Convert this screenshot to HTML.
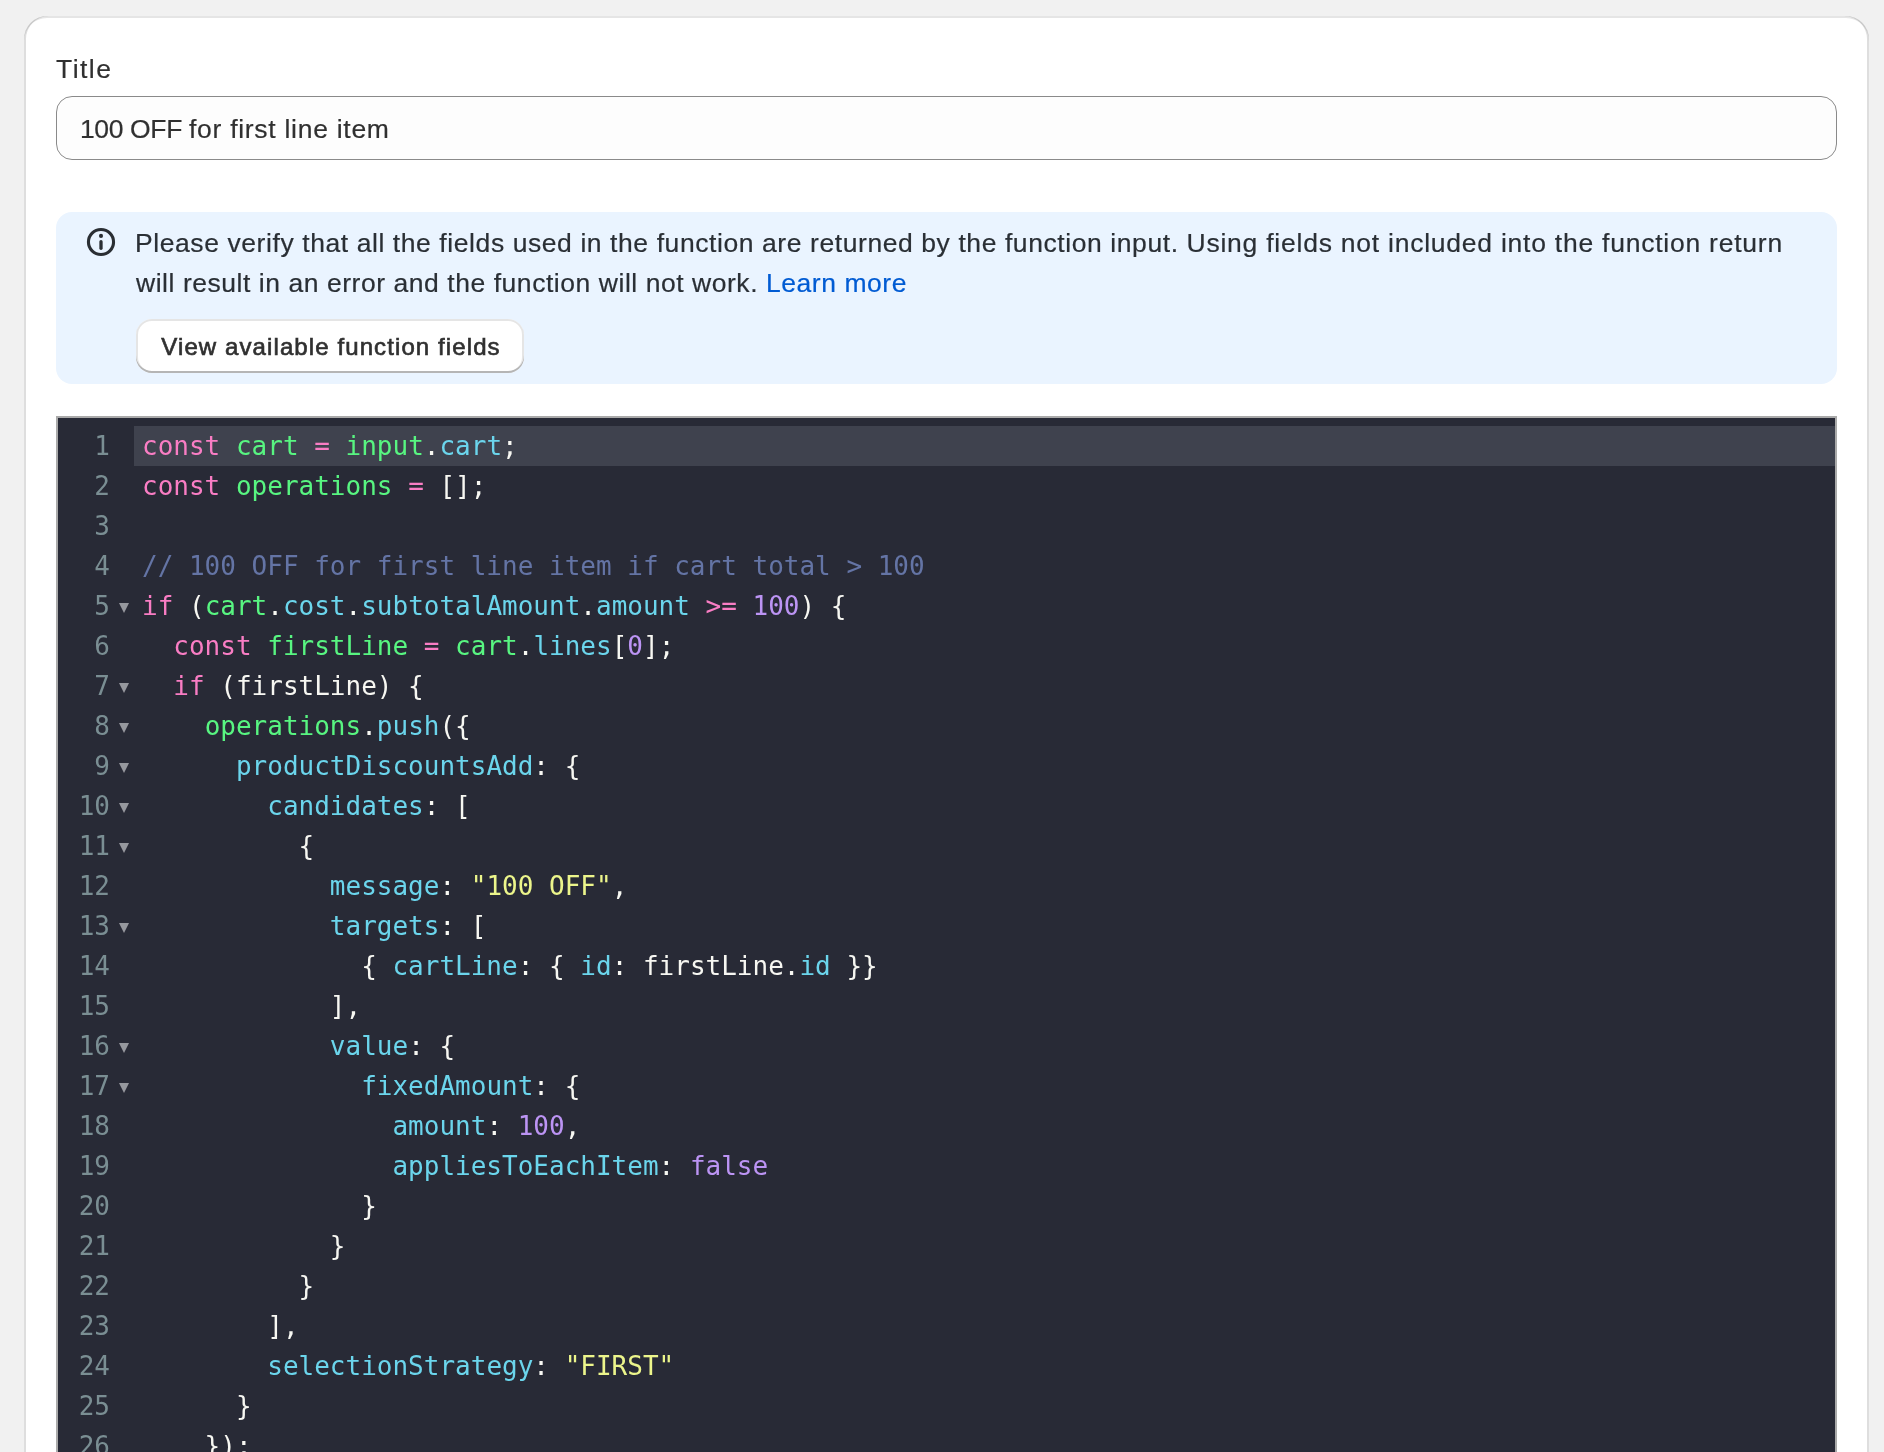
<!DOCTYPE html>
<html lang="en">
<head>
<meta charset="utf-8">
<title>Function editor</title>
<style>
*{box-sizing:border-box;margin:0;padding:0}
html,body{width:1884px;height:1452px;overflow:hidden;background:#f1f1f1}
body{font-family:"Liberation Sans",sans-serif;color:#303030;position:relative}
.card{position:absolute;left:24px;top:16px;width:1845px;height:1500px;background:#fff;border-radius:23px;box-shadow:inset 2px 0 0 0 rgba(0,0,0,.13),inset -2px 0 0 0 rgba(0,0,0,.13),inset 0 2px 0 0 rgba(204,204,204,.5)}
.label{position:absolute;left:56px;top:49px;font-size:26.5px;line-height:40px;color:#303030;letter-spacing:1.45px;-webkit-text-stroke:.2px #303030}
.input{position:absolute;left:56px;top:96px;width:1781px;height:64px;border:1.3px solid #8a8a8a;border-radius:16px;background:#fdfdfd;font-size:26.5px;line-height:61px;padding-left:23px;padding-top:2px;color:#303030;letter-spacing:.43px;-webkit-text-stroke:.2px #303030}
.banner{position:absolute;left:56px;top:212px;width:1781px;height:172px;background:#eaf4ff;border-radius:16px}
.banner svg{position:absolute;left:30px;top:15px}
.msg{position:absolute;left:79px;top:11px;font-size:26.5px;line-height:40px;color:#2a2f35;white-space:nowrap;letter-spacing:.65px;-webkit-text-stroke:.2px #2a2f35}
.msg .l1a{letter-spacing:.58px}.msg .l1b{letter-spacing:.76px}.msg .l2{letter-spacing:.545px;padding-left:1px}
.msg a{color:#005bd3;text-decoration:none;-webkit-text-stroke:.2px #005bd3}
.btn{position:absolute;left:80px;top:107px;width:388px;height:54px;padding-left:2px;background:#fff;border-radius:16px;font-size:24px;-webkit-text-stroke:.65px #303030;letter-spacing:1.1px;line-height:56px;text-align:center;color:#303030;box-shadow:inset 0 -2px 0 0 #b5b5b5,inset 0 0 0 2px rgba(0,0,0,.1),inset 0 1px 0 3px #fff}
.ed{position:absolute;left:56px;top:416px;width:1781px;height:1100px;border:2px solid #aaa;background:#282a36;padding-top:8px;font-family:"DejaVu Sans Mono","Liberation Mono",monospace;font-size:26px;line-height:41px;color:#f7f7f2}
.ln{height:40px;position:relative;white-space:pre}
.ln.a .t{background:#3f424e}
.g{position:absolute;left:0;top:0;width:52px;text-align:right;color:#7a8e93}
.f{position:absolute;left:60.5px;top:17px;width:0;height:0;border-left:5px solid transparent;border-right:5px solid transparent;border-top:10px solid #96989e}
.t{position:absolute;left:76px;right:0;top:0;height:40px;padding-left:8px}
.k{color:#f97dc4}.v{color:#58f581}.c{color:#6bd5ec}.n{color:#bc94f4}.y{color:#ecf58b}.m{color:#6474a5}
.label,.input,.banner,.ed{will-change:transform}
.i1{letter-spacing:-.37px}.i2{letter-spacing:.72px}
</style>
</head>
<body>
<div class="card"></div>
<div class="label">Title</div>
<div class="input"><span class="i1">100 OFF </span><span class="i2">for first line item</span></div>
<div class="banner">
<svg width="30" height="30" viewBox="0 0 30 30"><circle cx="15" cy="15" r="12.55" fill="none" stroke="#2a2e33" stroke-width="3.1"/><circle cx="15" cy="8.9" r="2.05" fill="#2a2e33"/><rect x="13.35" y="13.1" width="3.3" height="9.8" rx="1.65" fill="#2a2e33"/></svg>
<div class="msg"><span class="l1a">Please verify that all the fields used in the function are returned by the function input. </span><span class="l1b">Using fields not included into the function return</span><br><span class="l2">will result in an error and the function will not work. <a>Learn more</a></span></div>
<div class="btn">View available function fields</div>
</div>
<div class="ed">
<div class="ln a"><span class="g">1</span><span class="t"><span class="k">const</span> <span class="v">cart</span> <span class="k">=</span> <span class="v">input</span>.<span class="c">cart</span>;</span></div>
<div class="ln"><span class="g">2</span><span class="t"><span class="k">const</span> <span class="v">operations</span> <span class="k">=</span> [];</span></div>
<div class="ln"><span class="g">3</span><span class="t"></span></div>
<div class="ln"><span class="g">4</span><span class="t"><span class="m">// 100 OFF for first line item if cart total &gt; 100</span></span></div>
<div class="ln"><span class="g">5</span><i class="f"></i><span class="t"><span class="k">if</span> (<span class="v">cart</span>.<span class="c">cost</span>.<span class="c">subtotalAmount</span>.<span class="c">amount</span> <span class="k">&gt;=</span> <span class="n">100</span>) {</span></div>
<div class="ln"><span class="g">6</span><span class="t">  <span class="k">const</span> <span class="v">firstLine</span> <span class="k">=</span> <span class="v">cart</span>.<span class="c">lines</span>[<span class="n">0</span>];</span></div>
<div class="ln"><span class="g">7</span><i class="f"></i><span class="t">  <span class="k">if</span> (firstLine) {</span></div>
<div class="ln"><span class="g">8</span><i class="f"></i><span class="t">    <span class="v">operations</span>.<span class="c">push</span>({</span></div>
<div class="ln"><span class="g">9</span><i class="f"></i><span class="t">      <span class="c">productDiscountsAdd</span>: {</span></div>
<div class="ln"><span class="g">10</span><i class="f"></i><span class="t">        <span class="c">candidates</span>: [</span></div>
<div class="ln"><span class="g">11</span><i class="f"></i><span class="t">          {</span></div>
<div class="ln"><span class="g">12</span><span class="t">            <span class="c">message</span>: <span class="y">&quot;100 OFF&quot;</span>,</span></div>
<div class="ln"><span class="g">13</span><i class="f"></i><span class="t">            <span class="c">targets</span>: [</span></div>
<div class="ln"><span class="g">14</span><span class="t">              { <span class="c">cartLine</span>: { <span class="c">id</span>: firstLine.<span class="c">id</span> }}</span></div>
<div class="ln"><span class="g">15</span><span class="t">            ],</span></div>
<div class="ln"><span class="g">16</span><i class="f"></i><span class="t">            <span class="c">value</span>: {</span></div>
<div class="ln"><span class="g">17</span><i class="f"></i><span class="t">              <span class="c">fixedAmount</span>: {</span></div>
<div class="ln"><span class="g">18</span><span class="t">                <span class="c">amount</span>: <span class="n">100</span>,</span></div>
<div class="ln"><span class="g">19</span><span class="t">                <span class="c">appliesToEachItem</span>: <span class="n">false</span></span></div>
<div class="ln"><span class="g">20</span><span class="t">              }</span></div>
<div class="ln"><span class="g">21</span><span class="t">            }</span></div>
<div class="ln"><span class="g">22</span><span class="t">          }</span></div>
<div class="ln"><span class="g">23</span><span class="t">        ],</span></div>
<div class="ln"><span class="g">24</span><span class="t">        <span class="c">selectionStrategy</span>: <span class="y">&quot;FIRST&quot;</span></span></div>
<div class="ln"><span class="g">25</span><span class="t">      }</span></div>
<div class="ln"><span class="g">26</span><span class="t">    });</span></div>
</div>
</body>
</html>
